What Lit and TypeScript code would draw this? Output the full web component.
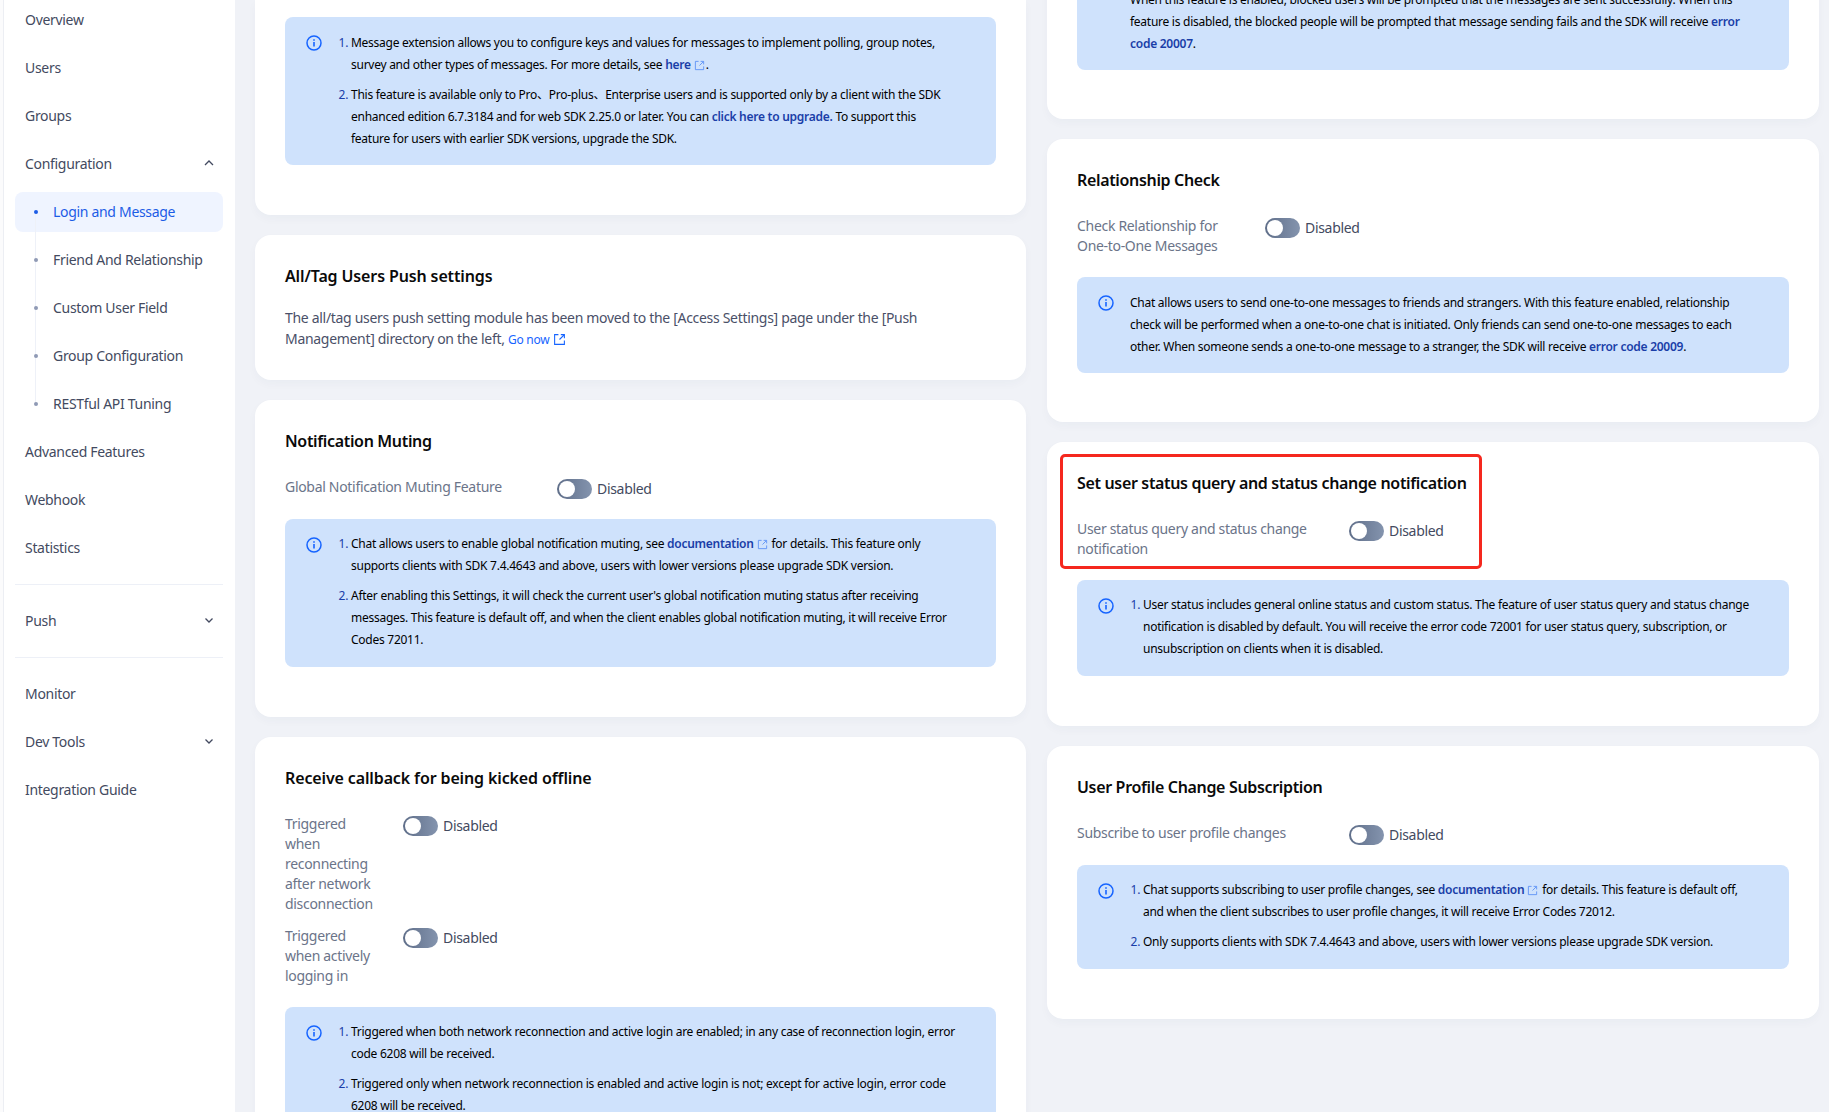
import { LitElement, html, css, svg } from "lit";
import { customElement } from "lit/decorators.js";

const ext = (cls = "") => html`<svg class="ext ${cls}" viewBox="0 0 12 12" fill="none" stroke="currentColor" stroke-width="1"><path d="M5 1.5H1.5v9h9V7M7.2 1.5h3.3v3.3M10.3 1.7 6 6"/></svg>`;
const info = html`<svg class="info" viewBox="0 0 16 16" fill="none" stroke="currentColor"><circle cx="8" cy="8" r="7" stroke-width="1.5"/>${svg`<path d="M8 7v4.6" stroke-width="1.6"/><path d="M8 4.2v1.5" stroke-width="1.6"/>`}</svg>`;
const chev = (up: boolean) => html`<svg class="chev" viewBox="0 0 16 16" fill="none" stroke="currentColor" stroke-width="1.3"><path d="${up ? "M4 10l4-4 4 4" : "M4.5 6.5 8 10l3.5-3.5"}"/></svg>`;
const toggle = html`<span class="toggle"><span class="track"><span class="knob"></span></span><span class="state">Disabled</span></span>`;
const doc = html`<a>documentation</a>${ext("faint")} `;

@customElement("app-root")
export class AppRoot extends LitElement {
  static styles = css`
    :host { display: block; height: 1112px; overflow: hidden; background: #f0f2f7; font-family: "Noto Sans", "Noto Sans CJK SC", sans-serif; }
    .page { display: flex; height: 1112px; overflow: hidden; }
    .rail { width: 3px; background: #fbfbfc; flex: none; }
    .side { width: 232px; flex: none; box-sizing: border-box; background: #fff; border-left: 1px solid #eceef3; padding: 0 12px 0 11px; display: flex; flex-direction: column; gap: 8px; font-size: 14px; letter-spacing: -0.022em; color: #434a60; }
    .item { height: 40px; box-sizing: border-box; display: flex; align-items: center; justify-content: space-between; padding: 0 6px 2px 10px; border-radius: 8px; position: relative; }
    .item.sub { padding-left: 38px; }
    .item.sub::before { content: ""; position: absolute; left: 18.5px; top: 18px; width: 4px; height: 4px; border-radius: 50%; background: #8f9ab5; z-index: 1; }
    .item.sub::after { content: ""; position: absolute; left: 20px; top: -8px; bottom: 0; width: 1px; background: #eef1f8; }
    .item.sub.first::after { top: 20px; }
    .item.sub.last::after { bottom: 20px; }
    .item.active { background: #eff4ff; color: #1c5ce6; }
    .item.active::before { background: #1c5ce6; }
    .divider { height: 1px; background: #edf0f7; margin: 8px 0; }
    .chev { width: 16px; height: 16px; color: #434a60; }
    .main { flex: 1; min-width: 0; display: flex; gap: 21px; padding: 0 10px 0 20px; }
    .col { width: 771px; flex: none; display: flex; flex-direction: column; gap: 20px; }
    .col.right { width: 772px; margin-top: -26px; }
    .card { background: #fff; border-radius: 16px; padding: 30px 30px 50px; box-shadow: 0 4px 10px rgba(30,50,90,.03); position: relative; flex: none; }
    .card.top { padding-top: 17px; border-radius: 0 0 16px 16px; }
    .card.topcut { padding-top: 0; padding-bottom: 49px; border-radius: 0 0 16px 16px; }
    .card.short { padding-bottom: 30px; }
    .card.tight { padding-bottom: 49px; }
    h3 { margin: -1px 0 25px; font-size: 16px; line-height: 24px; font-weight: 600; letter-spacing: -0.021em; color: #0a0a0a; }
    h3.loose { letter-spacing: -0.008em; }
    .plain { margin: -6px 0 0; font-size: 14px; line-height: 21px; letter-spacing: -0.022em; color: #4a5068; }
    .plain a { font-size: 12px; letter-spacing: -0.022em; color: #1664ff; }
    .plain .ext { width: 13px; height: 13px; color: #1664ff; margin-left: 4px; vertical-align: -2px; }
    .rows { display: flex; flex-direction: column; gap: 12px; margin-bottom: 20px; }
    .row { display: flex; align-items: flex-start; }
    .lab { box-sizing: border-box; flex: none; padding-right: 24px; margin: -1px 0 1px; font-size: 14px; line-height: 20px; letter-spacing: -0.022em; color: #6b7489; }
    .w118 { width: 118px; } .w188 { width: 188px; } .w272 { width: 272px; }
    .toggle { display: inline-flex; align-items: center; gap: 5px; margin-top: 1px; font-size: 14px; line-height: 20px; letter-spacing: -0.022em; color: #434a60; }
    .track { width: 35px; height: 20px; border-radius: 10px; background: linear-gradient(90deg, #5f6e89, #8494ae); display: block; position: relative; }
    .knob { position: absolute; left: 2px; top: 2px; width: 16px; height: 16px; border-radius: 50%; background: #fff; }
    .box { background: #cfe2fc; border-radius: 8px; padding: 15px 40px 15px 21px; display: flex; gap: 16px; font-size: 12px; line-height: 22px; letter-spacing: -0.022em; color: #000; }
    .box .info { width: 16px; height: 16px; flex: none; margin-top: 3px; color: #1664ff; }
    .box p { margin: -1px 0 1px; flex: 1; }
    .box.noicon { padding-left: 53px; }
    ol { margin: -1px 0 1px; padding: 0 0 0 13px; flex: 1; }
    .box.flush p, .box.flush ol { margin: 0; }
    li { margin: 0 0 8px; }
    li:last-child { margin-bottom: 0; }
    li::marker { color: #1a3ea8; }
    .box a { color: #1a3ea8; font-weight: 600; }
    .ext { width: 11px; height: 11px; vertical-align: -1.5px; }
    .ext.faint { color: #5f94f5; margin: 0 1px 0 3px; }
    .mark { position: absolute; left: 13px; top: 12px; width: 422px; height: 115px; box-sizing: border-box; border: 3px solid #f5281e; border-radius: 5px; pointer-events: none; }
  `;

  private nav() {
    const top = ["Overview", "Users", "Groups"];
    const subs = ["Login and Message", "Friend And Relationship", "Custom User Field", "Group Configuration", "RESTful API Tuning"];
    return html`
      ${top.map((t) => html`<div class="item">${t}</div>`)}
      <div class="item">Configuration ${chev(true)}</div>
      ${subs.map((t, i) => html`<div class="item sub ${i === 0 ? "first active" : ""} ${i === 4 ? "last" : ""}">${t}</div>`)}
      <div class="item">Advanced Features</div>
      <div class="item">Webhook</div>
      <div class="item">Statistics</div>
      <div class="divider"></div>
      <div class="item">Push ${chev(false)}</div>
      <div class="divider"></div>
      <div class="item">Monitor</div>
      <div class="item">Dev Tools ${chev(false)}</div>
      <div class="item">Integration Guide</div>`;
  }

  render() {
    return html`<div class="page">
      <div class="rail"></div>
      <nav class="side">${this.nav()}</nav>
      <main class="main">
        <div class="col">
          <section class="card top">
            <div class="box flush">${info}<ol>
              <li>Message extension allows you to configure keys and values for messages to implement polling, group notes, survey and other types of messages. For more details, see <a>here</a>${ext("faint")}.</li>
              <li>This feature is available only to Pro、Pro-plus、Enterprise users and is supported only by a client with the SDK enhanced edition 6.7.3184 and for web SDK 2.25.0 or later. You can <a>click here to upgrade.</a> To support this feature for users with earlier SDK versions, upgrade the SDK.</li>
            </ol></div>
          </section>
          <section class="card short">
            <h3 class="loose">All/Tag Users Push settings</h3>
            <p class="plain">The all/tag users push setting module has been moved to the [Access Settings] page under the [Push Management] directory on the left, <a>Go now</a>${ext()}</p>
          </section>
          <section class="card">
            <h3>Notification Muting</h3>
            <div class="rows"><div class="row"><div class="lab w272">Global Notification Muting Feature</div>${toggle}</div></div>
            <div class="box">${info}<ol>
              <li>Chat allows users to enable global notification muting, see ${doc}for details. This feature only supports clients with SDK 7.4.4643 and above, users with lower versions please upgrade SDK version.</li>
              <li>After enabling this Settings, it will check the current user's global notification muting status after receiving messages. This feature is default off, and when the client enables global notification muting, it will receive Error Codes 72011.</li>
            </ol></div>
          </section>
          <section class="card">
            <h3 class="loose">Receive callback for being kicked offline</h3>
            <div class="rows">
              <div class="row"><div class="lab w118">Triggered when reconnecting after network disconnection</div>${toggle}</div>
              <div class="row"><div class="lab w118">Triggered when actively logging in</div>${toggle}</div>
            </div>
            <div class="box">${info}<ol>
              <li>Triggered when both network reconnection and active login are enabled; in any case of reconnection login, error code 6208 will be received.</li>
              <li>Triggered only when network reconnection is enabled and active login is not; except for active login, error code 6208 will be received.</li>
            </ol></div>
          </section>
        </div>
        <div class="col right">
          <section class="card topcut">
            <div class="box noicon flush"><p>When this feature is enabled, blocked users will be prompted that the messages are sent successfully. When this feature is disabled, the blocked people will be prompted that message sending fails and the SDK will receive <a>error code 20007</a>.</p></div>
          </section>
          <section class="card tight">
            <h3>Relationship Check</h3>
            <div class="rows"><div class="row"><div class="lab w188">Check Relationship for One-to-One Messages</div>${toggle}</div></div>
            <div class="box flush">${info}<p>Chat allows users to send one-to-one messages to friends and strangers. With this feature enabled, relationship check will be performed when a one-to-one chat is initiated. Only friends can send one-to-one messages to each other. When someone sends a one-to-one message to a stranger, the SDK will receive <a>error code 20009</a>.</p></div>
          </section>
          <section class="card">
            <h3>Set user status query and status change notification</h3>
            <div class="rows"><div class="row"><div class="lab w272">User status query and status change notification</div>${toggle}</div></div>
            <div class="box">${info}<ol>
              <li>User status includes general online status and custom status. The feature of user status query and status change notification is disabled by default. You will receive the error code 72001 for user status query, subscription, or unsubscription on clients when it is disabled.</li>
            </ol></div>
            <div class="mark"></div>
          </section>
          <section class="card">
            <h3>User Profile Change Subscription</h3>
            <div class="rows"><div class="row"><div class="lab w272">Subscribe to user profile changes</div>${toggle}</div></div>
            <div class="box">${info}<ol>
              <li>Chat supports subscribing to user profile changes, see ${doc}for details. This feature is default off, and when the client subscribes to user profile changes, it will receive Error Codes 72012.</li>
              <li>Only supports clients with SDK 7.4.4643 and above, users with lower versions please upgrade SDK version.</li>
            </ol></div>
          </section>
        </div>
      </main>
    </div>`;
  }
}
